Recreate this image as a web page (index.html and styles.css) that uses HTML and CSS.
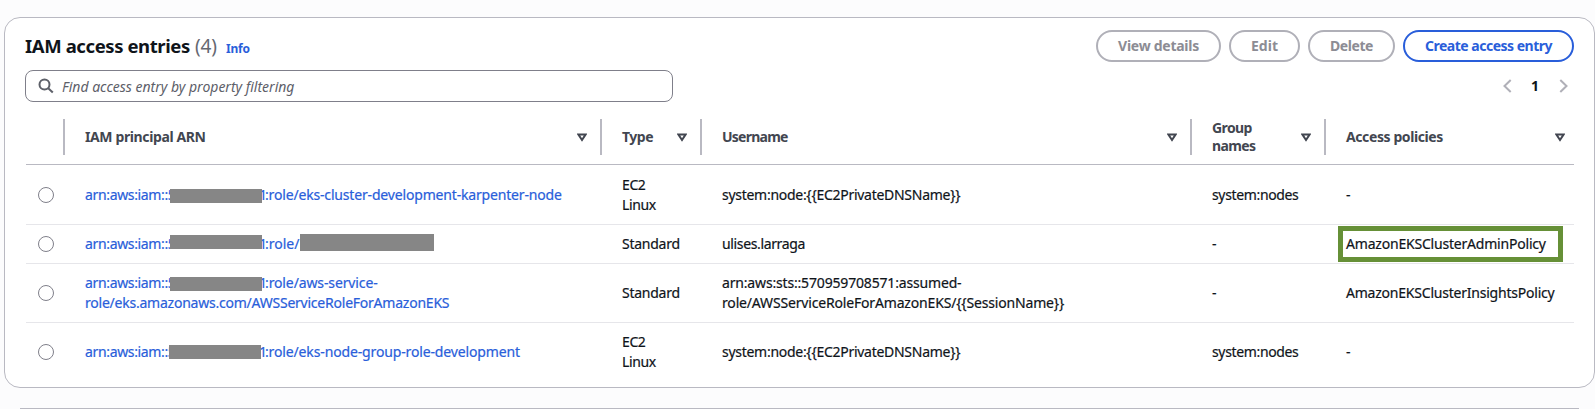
FILE: index.html
```html
<!DOCTYPE html>
<html lang="en">
<head>
<meta charset="utf-8">
<title>IAM access entries</title>
<link rel="stylesheet" href="styles.css">
</head>
<body>
<svg class="defs" width="0" height="0" aria-hidden="true">
  <symbol id="sort" viewBox="0 0 10 9"><path d="M1.4 1.5h7.2L5 7z" fill="none" stroke="currentColor" stroke-width="2" stroke-linejoin="miter"/></symbol>
</svg>
<main class="card">
  <header class="top">
    <h1 class="title">IAM access entries</h1>
    <span class="count">(4)</span>
    <a class="info">Info</a>
    <div class="actions">
      <button class="btn view">View details</button>
      <button class="btn edit">Edit</button>
      <button class="btn delete">Delete</button>
      <button class="btn create">Create access entry</button>
    </div>
  </header>
  <div class="tools">
    <div class="search">
      <svg class="glass" viewBox="0 0 16 16"><circle cx="6.5" cy="6.5" r="5" /><path d="M10.2 10.2l4.6 4.3"/></svg>
      <span class="placeholder">Find access entry by property filtering</span>
    </div>
    <div class="pager">
      <svg class="chev" viewBox="0 0 9 14"><path d="M7.7 1L1.5 7l6.200 6"/></svg>
      <span class="page">1</span>
      <svg class="chev" viewBox="0 0 9 14"><path d="M1.300 1l6.200 6-6.200 6"/></svg>
    </div>
  </div>
  <div class="table">
    <div class="row head">
      <div class="th"></div>
      <div class="th"><span class="h-arn">IAM principal ARN</span><svg class="sort"><use href="#sort"/></svg></div>
      <div class="th"><span class="h-type">Type</span><svg class="sort"><use href="#sort"/></svg></div>
      <div class="th"><span class="h-user">Username</span><svg class="sort"><use href="#sort"/></svg></div>
      <div class="th"><span class="h-group">Group<br>names</span><svg class="sort"><use href="#sort"/></svg></div>
      <div class="th"><span class="h-pol">Access policies</span><svg class="sort"><use href="#sort"/></svg></div>
    </div>
    <div class="row r1">
      <div class="pick"><i class="radio"></i></div>
      <div class="td link"><div class="arn"><span class="pre">arn:aws:iam::5</span><i class="mask"></i><span class="one">1</span><span class="a1">:role/eks-cluster-development-karpenter-node</span></div></div>
      <div class="td"><span class="type">EC2<br>Linux</span></div>
      <div class="td"><span class="node">system:node:{{EC2PrivateDNSName}}</span></div>
      <div class="td"><span class="nodes">system:nodes</span></div>
      <div class="td">-</div>
    </div>
    <div class="row r2">
      <div class="pick"><i class="radio"></i></div>
      <div class="td link"><div class="arn"><span class="pre">arn:aws:iam::5</span><i class="mask"></i><span class="one">1</span><span class="a2">:role/</span><i class="mask wide"></i></div></div>
      <div class="td"><span class="std">Standard</span></div>
      <div class="td"><span class="uli">ulises.larraga</span></div>
      <div class="td">-</div>
      <div class="td marked"><span class="admin">AmazonEKSClusterAdminPolicy</span></div>
    </div>
    <div class="row r3">
      <div class="pick"><i class="radio"></i></div>
      <div class="td link"><div><div class="arn"><span class="pre">arn:aws:iam::5</span><i class="mask"></i><span class="one">1</span><span class="a3">:role/aws-service-</span></div><span class="a3b">role/eks.amazonaws.com/AWSServiceRoleForAmazonEKS</span></div></div>
      <div class="td"><span class="std">Standard</span></div>
      <div class="td"><div><span class="sts">arn:aws:sts::570959708571:assumed-</span><br><span class="sess">role/AWSServiceRoleForAmazonEKS/{{SessionName}}</span></div></div>
      <div class="td">-</div>
      <div class="td"><span class="insights">AmazonEKSClusterInsightsPolicy</span></div>
    </div>
    <div class="row r4">
      <div class="pick"><i class="radio"></i></div>
      <div class="td link"><div class="arn"><span class="pre">arn:aws:iam::5</span><i class="mask"></i><span class="one">1</span><span class="a4">:role/eks-node-group-role-development</span></div></div>
      <div class="td"><span class="type">EC2<br>Linux</span></div>
      <div class="td"><span class="node">system:node:{{EC2PrivateDNSName}}</span></div>
      <div class="td"><span class="nodes">system:nodes</span></div>
      <div class="td">-</div>
    </div>
  </div>
</main>
<section class="next-card"></section>
</body>
</html>
```

FILE: styles.css
```css
* { box-sizing: border-box; }
body {
  margin: 0;
  height: 409px;
  overflow: hidden;
  padding: 17px 0 0 4px;
  background: #fcfcfd;
  color: #0f141a;
  font: 14px/20px "Noto Sans", "Open Sans", sans-serif;
}
.defs { position: absolute; }
.card {
  width: 1591px;
  height: 371px;
  padding: 12px 20px 0 21px;
  border: 1px solid #b9b9c2;
  border-radius: 16px;
  background: #fff;
}
.next-card {
  height: 1px;
  width: 1559px;
  margin: 20px 0 0 16px;
  background: #b9b9c2;
}
.top { display: flex; height: 32px; white-space: nowrap; }
.title { margin: 0 0 0 -1px; width: 170px; font-size: 18.5px; line-height: 32px; font-weight: 700; letter-spacing: -0.4px; }
.count { width: 31px; font-size: 19px; line-height: 32px; color: #656871; letter-spacing: -0.1px; }
.info { font-size: 12px; font-weight: 700; line-height: 37px; color: #295eda; letter-spacing: -0.2px; }
.actions { display: flex; gap: 8px; margin-left: auto; }
.btn {
  height: 32px;
  padding: 0;
  border: 2px solid #b0b0b8;
  border-radius: 16px;
  background: #fff;
  color: #8c8c94;
  font: 700 14px/28px "Noto Sans", sans-serif;
  white-space: nowrap;
}
.view { width: 125px; letter-spacing: -0.27px; }
.edit { width: 71px; }
.delete { width: 87px; letter-spacing: -0.4px; }
.create { width: 171px; border-color: #295eda; color: #295eda; letter-spacing: -0.5px; }
.tools { display: flex; justify-content: space-between; margin-top: 8px; height: 32px; }
.search {
  display: flex;
  align-items: center;
  width: 648px;
  margin-left: -1px;
  border: 1px solid #7f7f8a;
  border-radius: 8px;
  padding-left: 12px;
}
.glass { width: 16px; height: 16px; fill: none; stroke: #5d6069; stroke-width: 2; }
.placeholder { margin-left: 8px; padding-top: 2px; font-style: italic; color: #5d6069; white-space: nowrap; }
.pager { display: flex; align-items: center; gap: 19px; padding-right: 6px; }
.page { width: 9px; font-weight: 700; }
.chev { width: 9px; height: 14px; fill: none; stroke: #b0b0b8; stroke-width: 2; }
.table { margin-top: 17px; }
.row {
  display: grid;
  grid-template-columns: 39px 537px 100px 490px 134px 248px;
  border-bottom: 1px solid #e6e6ea;
}
.head { height: 46px; border-bottom-color: #b9b9c2; }
.th {
  display: flex;
  align-items: center;
  height: 36px;
  padding: 0 13px 0 20px;
  border-right: 2px solid #b9b9c2;
  color: #424650;
  font-weight: 700;
  line-height: 18px;
  white-space: nowrap;
}
.th:last-child { border-right: 0; padding-right: 9px; }
.sort { width: 10px; height: 9px; margin-left: auto; flex: none; }
.h-arn { letter-spacing: -0.38px; }
.h-type { letter-spacing: -0.5px; }
.h-user { letter-spacing: -0.75px; }
.h-group { letter-spacing: -0.6px; }
.h-pol { letter-spacing: -0.4px; }
.r1 { height: 60px; }
.r2 { height: 39px; }
.r3 { height: 59px; }
.r4 { height: 57px; border-bottom: 0; }
.td {
  display: flex;
  align-items: center;
  padding-left: 20px;
  white-space: nowrap;
  -webkit-text-stroke: 0.2px currentColor;
}
.pick { display: flex; align-items: center; padding-left: 12px; }
.radio { width: 16px; height: 16px; border: 1px solid #7f7f8a; border-radius: 50%; }
.link { color: #295eda; }
.arn { display: flex; height: 20px; }
.pre { width: 85px; letter-spacing: -0.35px; }
.mask { position: relative; z-index: 1; width: 92px; height: 14px; margin-top: 4.5px; background: #868686; }
.r2 .mask { margin-top: 1px; }
.r2 .wide { width: 134px; height: 17px; margin-top: 0; }
.r3 .mask { margin-top: 4px; }
.r4 .mask { margin: 3px 1px 0 -1px; }
.one { display: flex; justify-content: flex-end; width: 3px; transform: translateX(2px); }
.type { letter-spacing: -0.4px; }
.std { letter-spacing: -0.25px; }
.node { letter-spacing: -0.28px; }
.nodes { letter-spacing: -0.35px; }
.uli { letter-spacing: -0.36px; }
.sts { letter-spacing: -0.17px; }
.sess { letter-spacing: -0.17px; }
.admin { letter-spacing: -0.2px; }
.insights { letter-spacing: -0.22px; }
.a1 { letter-spacing: -0.17px; }
.a2 { width: 35px; }
.a3 { letter-spacing: -0.12px; }
.a3b { letter-spacing: -0.23px; }
.a4 { letter-spacing: -0.14px; }
.marked { position: relative; }
.marked::after {
  content: "";
  box-sizing: border-box;
  position: absolute;
  left: 12px;
  top: 1px;
  width: 225px;
  height: 36px;
  border: 5px solid #669037;
}
```
